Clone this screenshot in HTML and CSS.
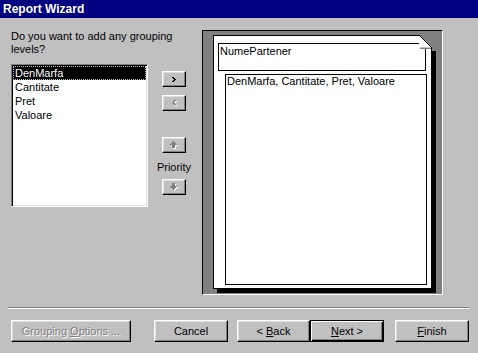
FILE: index.html
```html
<!DOCTYPE html>
<html lang="en">
<head>
    <meta charset="UTF-8">
    <title>Report Wizard</title>
    <link rel="stylesheet" href="styles.css">
</head>
<body>

    <div class="titlebar">Report Wizard</div>

    <div class="content">
        <p class="prompt">Do you want to add any grouping levels?</p>

        <ul class="listbox">
            <li class="item selected">DenMarfa</li>
            <li class="item">Cantitate</li>
            <li class="item">Pret</li>
            <li class="item">Valoare</li>
        </ul>

        <div class="mover">
            <button class="small-btn" type="button">
                <svg width="4" height="5" viewBox="0 0 4 5" shape-rendering="crispEdges">
                    <path fill="#000" d="M0 0h2v1H0z M1 1h2v1H1z M2 2h2v1H2z M1 3h2v1H1z M0 4h2v1H0z"/>
                </svg>
            </button>
            <button class="small-btn gap-sm" type="button" disabled>
                <svg width="5" height="6" viewBox="0 0 5 6" shape-rendering="crispEdges">
                    <path fill="#fff" d="M3 1h2v1H3z M2 2h2v1H2z M1 3h2v1H1z M2 4h2v1H2z M3 5h2v1H3z"/>
                    <path fill="#808080" d="M2 0h2v1H2z M1 1h2v1H1z M0 2h2v1H0z M1 3h2v1H1z M2 4h2v1H2z"/>
                </svg>
            </button>
            <button class="small-btn gap-lg" type="button" disabled>
                <svg width="8" height="8" viewBox="0 0 8 8" shape-rendering="crispEdges">
                    <path fill="#fff" d="M4 1h1v1H4z M3 2h3v1H3z M2 3h5v1H2z M1 4h7v1H1z M3 5h3v3H3z"/>
                    <path fill="#808080" d="M3 0h1v1H3z M2 1h3v1H2z M1 2h5v1H1z M0 3h7v1H0z M2 4h3v3H2z"/>
                </svg>
            </button>
            <div class="priority">Priority</div>
            <button class="small-btn gap-xs" type="button" disabled>
                <svg width="8" height="8" viewBox="0 0 8 8" shape-rendering="crispEdges">
                    <path fill="#fff" d="M3 1h3v3H3z M1 4h7v1H1z M2 5h5v1H2z M3 6h3v1H3z M4 7h1v1H4z"/>
                    <path fill="#808080" d="M2 0h3v3H2z M0 3h7v1H0z M1 4h5v1H1z M2 5h3v1H2z M3 6h1v1H3z"/>
                </svg>
            </button>
        </div>

        <div class="preview">
            <div class="page">
                <div class="group-box">NumePartener</div>
                <div class="detail-box">DenMarfa, Cantitate, Pret, Valoare</div>
                <svg class="dog-ear" width="17" height="17" viewBox="0 0 17 17" shape-rendering="crispEdges">
                    <polygon fill="#808080" points="0,0 17,0 17,16 13,16 13,13"/>
                    <polygon fill="#fff" points="0,0 0,13 13,13"/>
                    <path fill="#c0c0c0" d="M1 12h11v1H1z"/>
                    <path fill="#808080" d="M1 13h11v1H1z"/>
                    <path fill="#000" d="M0 0h1v1H0z M1 1h1v1H1z M2 2h1v1H2z M3 3h1v1H3z M4 4h1v1H4z M5 5h1v1H5z M6 6h1v1H6z M7 7h1v1H7z M8 8h1v1H8z M9 9h1v1H9z M10 10h1v1H10z M11 11h1v1H11z M12 12h1v5H12z M13 16h4v1H13z"/>
                </svg>
            </div>
        </div>
    </div>

    <div class="separator"></div>

    <div class="actions">
        <button class="btn wide" type="button" disabled>Grouping <u>O</u>ptions ...</button>
        <button class="btn cancel" type="button">Cancel</button>
        <button class="btn back" type="button">&lt; <u>B</u>ack</button>
        <button class="btn default" type="button"><u>N</u>ext &gt;</button>
        <button class="btn finish" type="button"><u>F</u>inish</button>
    </div>

</body>
</html>
```

FILE: styles.css
```css
* {
    margin: 0;
    padding: 0;
    box-sizing: border-box;
}
body {
    width: 478px;
    height: 353px;
    overflow: hidden;
    background-color: #c0c0c0;
    color: #000;
    font-family: 'Liberation Sans', Arial, sans-serif;
    font-size: 11px;
}
.titlebar {
    height: 18px;
    line-height: 18px;
    padding-left: 3px;
    background-color: #000080;
    color: #fff;
    font-size: 12px;
    font-weight: bold;
}
.content {
    display: grid;
    grid-template-columns: 151px 40px 241px;
    grid-template-rows: 26px auto;
    padding: 12px 0 0 11px;
}
.prompt {
    grid-column: 1 / 3;
    grid-row: 1;
    width: 175px;
    line-height: 13px;
}
.listbox {
    grid-column: 1;
    grid-row: 2;
    align-self: start;
    width: 137px;
    height: 143px;
    margin-top: 8px;
    padding: 1px;
    list-style: none;
    background-color: #fff;
    border: 1px solid;
    border-color: #808080 #fff #fff #808080;
    box-shadow: inset 1px 1px 0 #000, inset -1px -1px 0 #dfdfdf;
}
.item {
    height: 14px;
    line-height: 14px;
    padding-left: 2px;
}
.item.selected {
    background-color: #000;
    color: #fff;
    outline: 1px dotted #c0c0c0;
    outline-offset: -1px;
}
.mover {
    grid-column: 2;
    grid-row: 2;
    display: flex;
    flex-direction: column;
    align-items: flex-start;
    padding-top: 15px;
}
.small-btn {
    width: 24px;
    height: 16px;
    display: flex;
    align-items: center;
    justify-content: center;
    background-color: #c0c0c0;
    border: 1px solid;
    border-color: #fff #000 #000 #fff;
    box-shadow: inset -1px -1px 0 #808080, inset 1px 1px 0 #dfdfdf;
}
.small-btn svg {
    display: block;
}
.gap-sm {
    margin-top: 8px;
}
.gap-lg {
    margin-top: 26px;
}
.gap-xs {
    margin-top: 5px;
}
.priority {
    width: 24px;
    display: flex;
    justify-content: center;
    white-space: nowrap;
    margin-top: 8px;
    line-height: 13px;
}
.preview {
    grid-column: 3;
    grid-row: 1 / 3;
    width: 241px;
    height: 265px;
    padding: 4px 0 0 10px;
    background-color: #808080;
    border: 1px solid;
    border-color: #000 #fff #fff #000;
}
.page {
    position: relative;
    width: 219px;
    height: 254px;
    background-color: #fff;
    border: 1px solid #000;
    box-shadow: 4px 4px 0 #000;
}
.group-box {
    height: 28px;
    margin: 7px 5px 0 4px;
    padding: 1px 0 0 1px;
    line-height: 13px;
    border: 1px solid #000;
}
.detail-box {
    height: 211px;
    margin: 3px 4px 0 11px;
    padding-left: 1px;
    line-height: 13px;
    border: 1px solid #000;
}
.dog-ear {
    position: absolute;
    top: -1px;
    right: -5px;
    display: block;
}
.separator {
    width: 461px;
    height: 2px;
    margin: 12px 0 0 8px;
    border-top: 1px solid #808080;
    border-bottom: 1px solid #fff;
}
.actions {
    display: flex;
    margin-top: 11px;
    padding-left: 11px;
}
.btn {
    width: 74px;
    height: 22px;
    line-height: 17px;
    font-family: inherit;
    font-size: 11px;
    color: #000;
    text-align: center;
    background-color: #c0c0c0;
    border: 1px solid;
    border-color: #fff #000 #000 #fff;
    box-shadow: inset -1px -1px 0 #808080, inset 1px 1px 0 #dfdfdf;
}
.btn.wide {
    width: 120px;
    margin-right: 23px;
    color: #808080;
    text-shadow: 1px 1px 0 #fff;
}
.btn.cancel {
    margin-right: 9px;
}
.btn.back {
    width: 73px;
}
.btn.default {
    border-color: #000;
    box-shadow: inset 1px 1px 0 #fff, inset -1px -1px 0 #000, inset -2px -2px 0 #808080;
}
.btn.finish {
    margin-left: 11px;
}
```
